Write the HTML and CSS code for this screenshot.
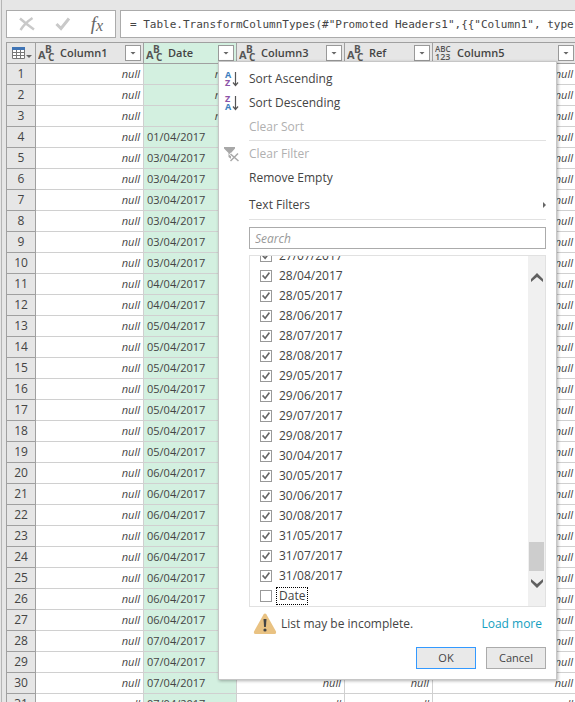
FILE: index.html
```html
<!DOCTYPE html>
<html lang="en">
<head>
<meta charset="utf-8">
<title>Query Editor</title>
<link rel="stylesheet" href="styles.css">
</head>
<body>
<svg class="defs" aria-hidden="true">
  <symbol id="type-text" viewBox="0 0 18 18">
    <text class="type-letter type-first" x="0" y="15">A</text>
    <text class="type-letter" x="7" y="9">B</text>
    <text class="type-letter" x="10" y="17">C</text>
  </symbol>
  <symbol id="type-any" viewBox="0 0 18 18">
    <text class="type-small" x="0" y="8">ABC</text>
    <text class="type-digits" x="0" y="16">123</text>
  </symbol>
</svg>

<main class="editor">
  <div class="formula-row">
    <div class="formula-tools">
      <button type="button" class="tool" aria-label="Cancel edit">
        <svg width="16" height="14" viewBox="0 0 16 14"><path d="M1 1.500 C5 5 10 9 15 12.500 M13.500 1 C9 4 4 9 1.500 13" fill="none" stroke="#c9c9c9" stroke-width="2.400"/></svg>
      </button>
      <button type="button" class="tool" aria-label="Apply edit">
        <svg width="16" height="14" viewBox="0 0 16 14"><path d="M1.500 7 L6 11.500 L14 1.500" fill="none" stroke="#c9c9c9" stroke-width="3"/></svg>
      </button>
      <button type="button" class="tool fx" aria-label="Insert step">
        <span class="fx-f">f</span><span class="fx-x">x</span>
      </button>
    </div>
    <input class="formula" type="text" aria-label="Formula" value='= Table.TransformColumnTypes(#"Promoted Headers1",{{"Column1", type text}, {"Date", type text}})'>
  </div>

  <div class="grid">
    <table>
      <colgroup>
        <col class="c-num"><col class="c-wide"><col class="c-date"><col class="c-wide"><col class="c-ref"><col class="c-last">
      </colgroup>
      <thead>
        <tr>
          <th>
            <button type="button" class="table-menu" aria-label="Table menu">
              <svg width="20" height="14" viewBox="0 0 20 14"><path d="M0 1h13v12H0z" fill="#fff"/><path d="M0 1h13v3H0z" fill="#3f74b5"/><path d="M.5 4v8.500h12V4M4.500 4v8M8.500 4v8M1 6.500h12M1 9.500h12" fill="none" stroke="#777"/><path d="M14 9h6l-3 3z" fill="#666"/></svg>
            </button>
          </th>
          <th><div class="head"><svg class="type"><use href="#type-text"/></svg><span>Column1</span><button type="button" class="drop" aria-label="Filter Column1"></button></div></th>
          <th class="selected"><div class="head"><svg class="type"><use href="#type-text"/></svg><span>Date</span><button type="button" class="drop" aria-label="Filter Date"></button></div></th>
          <th><div class="head"><svg class="type"><use href="#type-text"/></svg><span>Column3</span><button type="button" class="drop" aria-label="Filter Column3"></button></div></th>
          <th><div class="head"><svg class="type"><use href="#type-text"/></svg><span>Ref</span><button type="button" class="drop" aria-label="Filter Ref"></button></div></th>
          <th><div class="head"><svg class="type"><use href="#type-any"/></svg><span>Column5</span><button type="button" class="drop" aria-label="Filter Column5"></button></div></th>
        </tr>
      </thead>
      <tbody id="rows"></tbody>
    </table>

    <form class="popup">
      <div class="menu">
        <button type="button" class="item">
          <svg class="icon" width="16" height="16" viewBox="0 0 16 16"><text class="sort-a" x="1" y="7">A</text><text class="sort-z" x="1" y="15">Z</text><path d="M11.500 1v13M9 11.500l2.500 3 2.500-3" fill="none" stroke="#555" stroke-width="1.200"/></svg>
          <span>Sort Ascending</span>
        </button>
        <button type="button" class="item">
          <svg class="icon" width="16" height="16" viewBox="0 0 16 16"><text class="sort-z" x="1" y="7">Z</text><text class="sort-a" x="1" y="15">A</text><path d="M11.500 1v13M9 11.500l2.500 3 2.500-3" fill="none" stroke="#555" stroke-width="1.200"/></svg>
          <span>Sort Descending</span>
        </button>
        <button type="button" class="item" disabled><span class="icon"></span><span>Clear Sort</span></button>
        <hr>
        <button type="button" class="item" disabled>
          <svg class="icon" width="16" height="16" viewBox="0 0 16 16"><path d="M0 1h11v1.500L7 7v6L4.500 11V7L0 2.500z" fill="#a8a8a8"/><path d="M6 7.500l8.500 7.500M14 7l-7.500 8" fill="none" stroke="#fff" stroke-width="3"/><path d="M6.500 8l8 7M14 7.500l-7.500 7.500" fill="none" stroke="#a8a8a8" stroke-width="1.500"/></svg>
          <span>Clear Filter</span>
        </button>
        <button type="button" class="item"><span class="icon"></span><span>Remove Empty</span></button>
        <button type="button" class="item submenu"><span class="icon"></span><span>Text Filters</span></button>
        <hr>
      </div>
      <div class="filter">
        <input class="search" type="text" placeholder="Search" aria-label="Search">
        <div class="list">
          <div class="values" id="values"></div>
          <div class="scrollbar">
            <svg width="12" height="9" viewBox="0 0 12 9"><path d="M0 6l6-6 6 6v3L6 4 0 9z" fill="#606060"/></svg>
            <div class="thumb"></div>
            <svg width="12" height="9" viewBox="0 0 12 9"><path d="M0 0l6 5 6-5v3L6 9 0 3z" fill="#606060"/></svg>
          </div>
        </div>
        <div class="notice">
          <svg width="24" height="22" viewBox="0 0 24 22"><path d="M10.500 1.500q1.500-2 3 0l9.500 17q.5 2.500-1.500 2.500h-19q-2 0-1.500-2.500z" fill="#e9c282"/><path d="M10.500 6h3l-.6 8h-1.800z" fill="#444"/><circle cx="12" cy="17" r="1.600" fill="#444"/></svg>
          <span>List may be incomplete.</span>
          <a href="#more">Load more</a>
        </div>
        <div class="actions">
          <button type="submit" class="btn primary">OK</button>
          <button type="button" class="btn">Cancel</button>
        </div>
      </div>
    </form>
  </div>
</main>
<script src="app.js"></script>
</body>
</html>
```
FILE: styles.css
```css
* { box-sizing: border-box; }

body {
  margin: 0;
  height: 100vh;
  overflow: hidden;
  background: #e6e6e6;
  color: #444;
  font: 12px/20px "Open Sans", "Noto Sans", sans-serif;
}

button, input {
  margin: 0;
  padding: 0;
  border: 0;
  border-radius: 0;
  background: none;
  color: inherit;
  font: inherit;
}

.defs { display: none; }

.editor {
  display: flex;
  flex-direction: column;
  gap: 4px;
  height: 100%;
  margin-left: 1px;
  padding: 10px 0 0 4px;
  border-left: 1px solid #b5b5b5;
}

.formula-row { display: flex; gap: 4px; height: 28px; }

.formula-tools {
  display: flex;
  align-items: center;
  justify-content: space-around;
  width: 110px;
  padding: 0 2px;
  border: 1px solid #ababab;
  background: #fff;
}

.tool { display: flex; align-items: center; height: 24px; }
.fx { color: #666; font: italic 19px/20px "Liberation Serif", serif; }
.fx-x { font-size: 16px; padding-top: 3px; }

.formula {
  flex: 1;
  min-width: 0;
  padding-left: 9px;
  border: 1px solid #ababab;
  border-right: 0;
  background: #fff;
  font: 11px "DejaVu Sans Mono", monospace;
}

.grid { position: relative; flex: 1; min-height: 0; }

table {
  width: 571px;
  table-layout: fixed;
  border-collapse: separate;
  border-spacing: 0;
  border-top: 1px solid #a0a0a0;
  border-left: 1px solid #a0a0a0;
  background: #fff;
  font-size: 11px;
}

.c-num { width: 29px; }
.c-wide { width: 108px; }
.c-date { width: 93px; }
.c-ref { width: 88px; }
.c-last { width: 144px; }

th, td { height: 21px; padding: 0; line-height: 20px; overflow: hidden; white-space: nowrap; }
th { background: #e6e6e6; border-right: 1px solid #a0a0a0; border-bottom: 1px solid #a0a0a0; font-weight: 400; }
td { padding: 0 3px; border-right: 1px solid #d0d0d0; border-bottom: 1px solid #d0d0d0; }
tbody th { font-size: 12px; }
th.selected, td.selected { background: #d3f0e0; }
.null { font-style: italic; text-align: right; }

.table-menu { display: flex; margin-left: 5px; }

.head { display: flex; align-items: center; height: 20px; padding: 0 2px; }
.head span { flex: 1; padding-left: 4px; text-align: left; font-weight: 600; }
.type { width: 18px; height: 18px; fill: #555; }
.type-letter { font: 700 10px "Open Sans", sans-serif; }
.type-first { font-size: 11px; }
.type-small { font: 600 8px "Open Sans", sans-serif; }
.type-digits { font: 600 9px "Open Sans", sans-serif; }

.drop {
  display: grid;
  place-items: center;
  width: 16px;
  height: 16px;
  border: 1px solid #999;
  background: #fff;
}
.drop::before { content: ""; width: 6px; height: 3px; background: #666; clip-path: polygon(0 0, 100% 0, 50% 100%); }

.popup {
  position: absolute;
  top: 19px;
  left: 212px;
  width: 339px;
  padding: 5px 10px 10px 5px;
  border: 1px solid #c6c6c6;
  background: #fff;
  box-shadow: 1px 1px 3px rgba(0, 0, 0, .3);
}

.menu { display: flex; flex-direction: column; }
.item { display: flex; align-items: center; gap: 9px; height: 24px; text-align: left; }
.item:disabled { color: #b0b0b0; }
.icon { flex: none; width: 16px; height: 16px; }
.sort-a { font: 700 9px "Open Sans", sans-serif; fill: #3d7fc0; }
.sort-z { font: 700 9px "Open Sans", sans-serif; fill: #8c55a8; }
hr { width: calc(100% - 25px); margin: 1px 0 1px 25px; border: 0; border-top: 1px solid #e1e1e1; }
.submenu { height: 26px; margin-top: 2px; }
.submenu::after { content: ""; width: 3px; height: 6px; margin-left: auto; background: #666; clip-path: polygon(0 0, 100% 50%, 0 100%); }

.filter { display: flex; flex-direction: column; margin: 6px 0 0 25px; }
.search { width: 100%; height: 22px; padding: 0 5px; border: 1px solid #ababab; }
.search::placeholder { color: #999; font-style: italic; opacity: 1; }

.list {
  display: flex;
  height: 352px;
  margin-top: 6px;
  border: 1px solid #e1e1e1;
}
.values { display: flex; flex: 1; flex-direction: column; justify-content: flex-end; overflow: hidden; padding-left: 10px; }
.value { display: flex; flex: none; align-items: center; gap: 4px; height: 20px; }
.value span { padding: 0 2px; line-height: 16px; border: 1px solid transparent; }
.value .focused { border: 1px dotted #000; }
.value input {
  appearance: none;
  display: grid;
  width: 12px;
  height: 12px;
  border: 1px solid #999;
  background: #fff;
}
.value input:checked::before {
  content: "";
  margin: 1px;
  background: #666;
  clip-path: polygon(0 50%, 15% 35%, 38% 62%, 85% 0, 100% 15%, 40% 95%);
}

.scrollbar {
  display: flex;
  flex-direction: column;
  align-items: center;
  width: 17px;
  padding: 17px 0 18px;
  background: #f0f0f0;
}
.thumb { width: 15px; height: 29px; margin: auto 0 8px; background: #cdcdcd; }

.notice { display: flex; align-items: center; gap: 4px; height: 34px; padding: 0 4px; }
.notice a { margin-left: auto; color: #12a0c0; text-decoration: none; }

.actions { display: flex; justify-content: flex-end; gap: 10px; margin-top: 6px; }
.btn { width: 60px; height: 22px; border: 1px solid #ababab; background: #e9e9e9; font-size: 11px; line-height: 20px; }
.btn.primary { border-color: #3399ff; }
```
FILE: app.js
```js
const runs = [
  [null, 3], ["01/04/2017", 1], ["03/04/2017", 6], ["04/04/2017", 2],
  ["05/04/2017", 7], ["06/04/2017", 8], ["07/04/2017", 4]
];
const dates = runs.flatMap(([value, count]) => Array(count).fill(value));

function cell(value, selected) {
  const td = document.createElement("td");
  td.textContent = value === null ? "null" : value;
  td.classList.toggle("null", value === null);
  td.classList.toggle("selected", selected);
  return td;
}

const body = document.getElementById("rows");
dates.forEach((date, i) => {
  const tr = document.createElement("tr");
  const th = document.createElement("th");
  th.textContent = i + 1;
  tr.append(th, cell(null, false), cell(date, true), cell(null, false), cell(null, false), cell(null, false));
  body.append(tr);
});

const values = [
  "27/07/2017", "28/04/2017", "28/05/2017", "28/06/2017", "28/07/2017", "28/08/2017",
  "29/05/2017", "29/06/2017", "29/07/2017", "29/08/2017", "30/04/2017", "30/05/2017",
  "30/06/2017", "30/08/2017", "31/05/2017", "31/07/2017", "31/08/2017", "Date"
];
const list = document.getElementById("values");
values.forEach((value) => {
  const label = document.createElement("label");
  const box = document.createElement("input");
  const text = document.createElement("span");
  label.className = "value";
  box.type = "checkbox";
  box.checked = value !== "Date";
  text.textContent = value;
  text.classList.toggle("focused", value === "Date");
  label.append(box, text);
  list.append(label);
});
```
